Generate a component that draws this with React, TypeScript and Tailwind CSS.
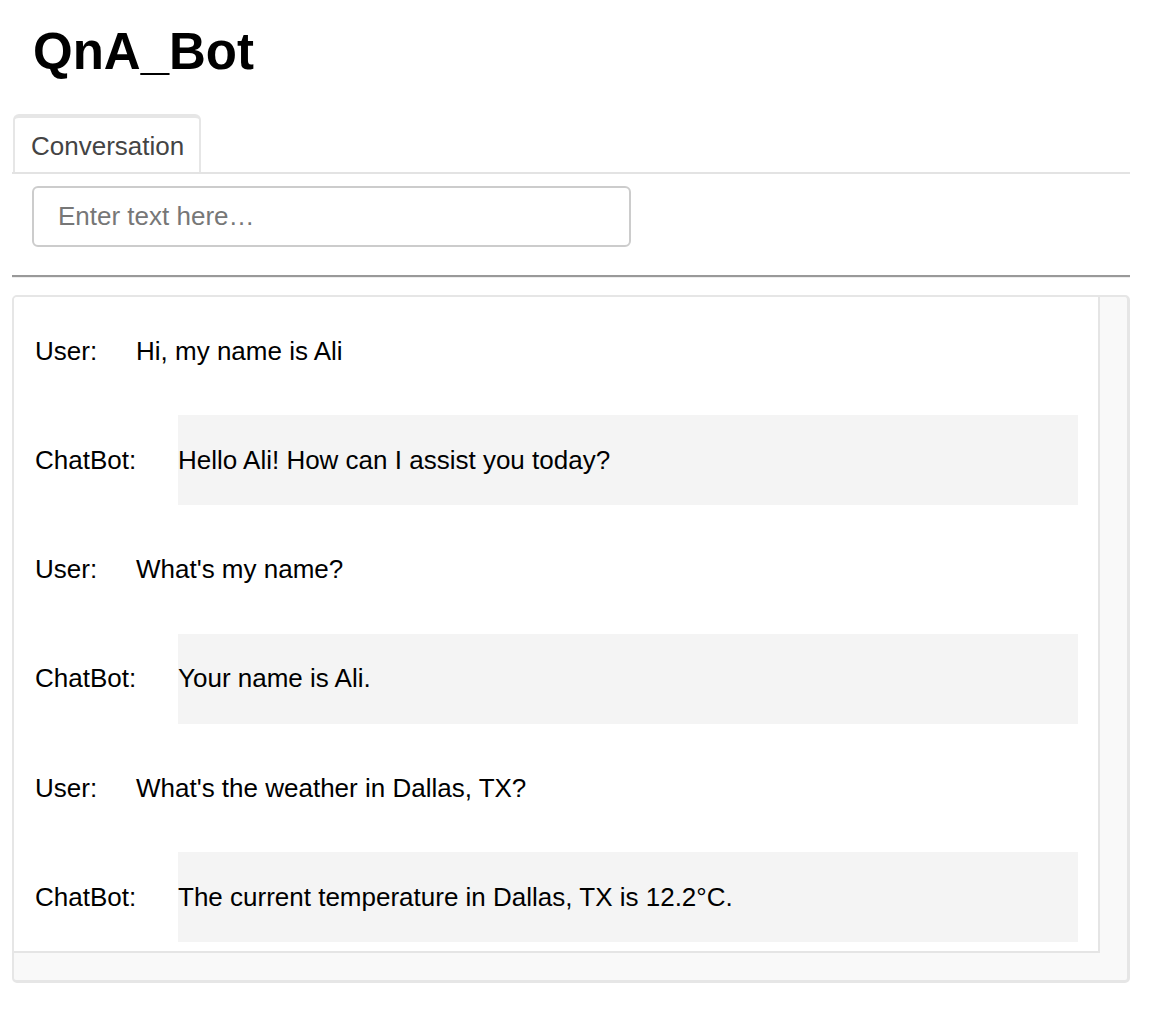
import React from "react";

const rows: { who: "User" | "ChatBot"; text: string }[] = [
  { who: "User", text: "Hi, my name is Ali" },
  { who: "ChatBot", text: "Hello Ali! How can I assist you today?" },
  { who: "User", text: "What's my name?" },
  { who: "ChatBot", text: "Your name is Ali." },
  { who: "User", text: "What's the weather in Dallas, TX?" },
  { who: "ChatBot", text: "The current temperature in Dallas, TX is 12.2°C." },
];

export default function App() {
  return (
    <div
      className="w-[1168px] h-[1016px] bg-white text-black"
      style={{ fontFamily: '"Liberation Sans", Arial, Helvetica, sans-serif' }}
    >
      <div className="pl-[12px] pr-[38px]">
        <h1 className="pl-[21px] pt-[22px] text-[51px] leading-[60px] font-bold">QnA_Bot</h1>

        {/* Tabs */}
        <div className="mt-[32px] flex border-b-2 border-[#e3e3e3]">
          <div className="ml-[1px] h-[58px] w-[188px] rounded-t-[6px] border-x-2 border-t-4 border-[#e6e6e6] bg-white flex items-center pl-[16px] pt-[3px] text-[26px] text-[#444]">
            Conversation
          </div>
        </div>

        {/* Input */}
        <div className="pl-[20px] pt-[12px]">
          <div className="h-[61px] w-[599px] rounded-[6px] border-2 border-[#cccccc] flex items-center pl-[24px] text-[26px] text-[#777]">
            Enter text here…
          </div>
        </div>

        {/* Rule */}
        <div className="mt-[28px] border-t-2 border-b border-t-[#999999] border-b-[#eeeeee]" />

        {/* Chat panel */}
        <div className="mt-[17px] h-[688px] rounded-[5px] border-2 border-r-[3px] border-b-[3px] border-[#e6e6e6] bg-[#f9f9f9] pr-[27px] pb-[27px] overflow-hidden">
          <div className="h-full bg-white border-r-2 border-b-2 border-[#e5e5e5] pt-[9px] pl-[21px] pr-[20px] flex flex-col gap-[19.25px] text-[26px]">
            {rows.map((r, i) =>
              r.who === "User" ? (
                <div key={i} className="flex h-[90px] items-center">
                  <div className="w-[101px] shrink-0">User:</div>
                  <div>{r.text}</div>
                </div>
              ) : (
                <div key={i} className="flex h-[90px] items-stretch">
                  <div className="w-[143px] shrink-0 flex items-center">ChatBot:</div>
                  <div className="flex-1 bg-[#f4f4f4] flex items-center">{r.text}</div>
                </div>
              )
            )}
          </div>
        </div>
      </div>
    </div>
  );
}
